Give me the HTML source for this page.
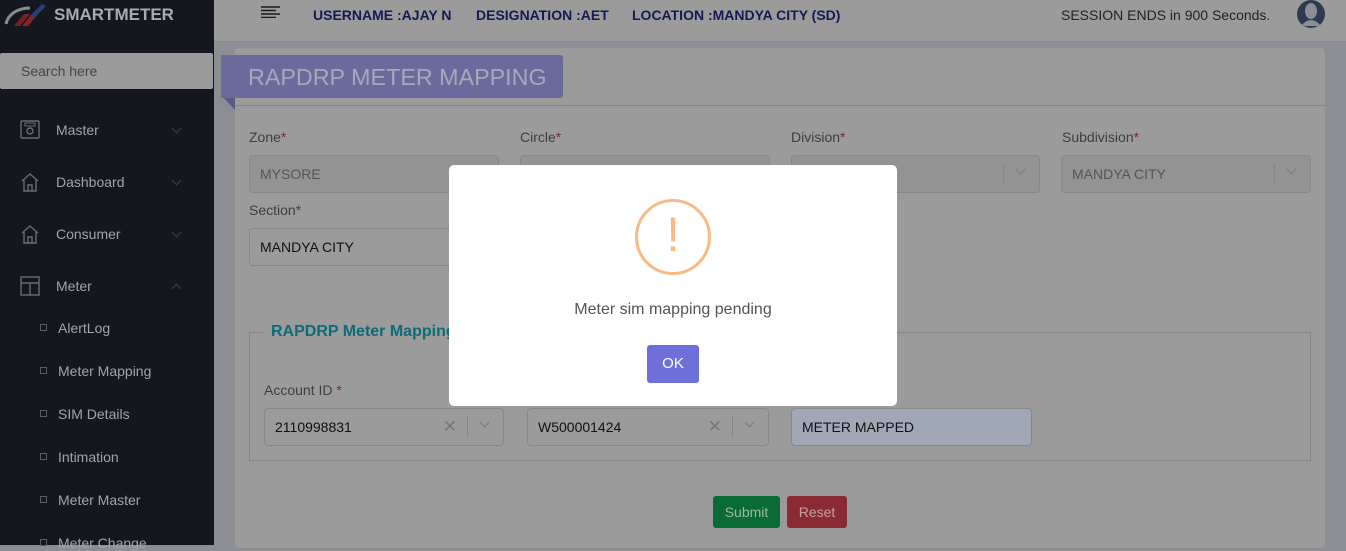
<!DOCTYPE html>
<html><head><meta charset="utf-8"><style>
*{box-sizing:border-box;margin:0;padding:0}
body{width:1346px;height:545px;overflow:hidden;position:relative;font-family:"Liberation Sans",sans-serif;background:#8d8e94}
.a{position:absolute}
.sb{left:0;top:0;width:214px;height:545px;background:#15171e}
.mi{color:#a2a4aa;font-size:14px}
.sub{color:#a2a4aa;font-size:14px}
.sq{width:7px;height:7px;border:1px solid #5a5c62}
.chev{width:7px;height:7px;border-right:1px solid #3c3f47;border-bottom:1px solid #3c3f47;transform:rotate(45deg)}
.lbl{font-size:14px;color:#3e3e3e}
.lbl b{color:#7a2a2a;font-weight:normal}
.inp{height:38px;border:1px solid #888;border-radius:4px;background:#939393;font-size:14px;color:#555;padding:10px 10px}
.inp2{background:#9b9b9b;color:#111}
.dd{position:absolute;right:0;top:8px;width:36px;height:20px;border-left:1px solid #858585}
.dd:after{content:"";position:absolute;left:13px;top:2px;width:6px;height:6px;border-right:1.5px solid #7a7a7a;border-bottom:1.5px solid #7a7a7a;transform:rotate(45deg)}
.x{position:absolute;right:46px;top:8px;color:#777;font-size:17px}
.hd{color:#141a55;font-weight:bold;font-size:14px;top:7px}
</style></head><body>
<div class="a sb"></div>
<svg class="a" style="left:4px;top:2px" width="46" height="28" viewBox="0 0 46 28">
<path d="M2 22 C4 12 14 6 26 6" stroke="#8a8c94" stroke-width="3" fill="none"/>
<path d="M10 24 L20 12 L26 12 L16 24Z" fill="#7a2024"/>
<path d="M18 24 L28 12 L34 12 L24 24Z" fill="#8a2226"/>
<path d="M26 14 L38 2 L42 4 L30 16Z" fill="#2a3f7a"/>
</svg>
<div class="a" style="left:54px;top:5px;color:#a9abb0;font-weight:bold;font-size:17px">SMARTMETER</div>
<div class="a" style="left:0;top:53px;width:213px;height:36px;background:#9b9b9b;border-radius:2px;padding:10px 21px;font-size:14px;color:#454545">Search here</div>
<svg class="a" style="left:20px;top:120px" width="20" height="20"><rect x="1" y="1" width="18" height="17" rx="1" fill="none" stroke="#6a6c72" stroke-width="1.4"/><rect x="5" y="3" width="10" height="3" fill="none" stroke="#6a6c72"/><circle cx="10" cy="11" r="3" fill="none" stroke="#6a6c72" stroke-width="1.4"/></svg>
<svg class="a" style="left:20px;top:172px" width="20" height="20"><path d="M2 9 L10 2 L18 9 M4 8 V19 H16 V8 M8 19 V13 H12 V19" fill="none" stroke="#6a6c72" stroke-width="1.4"/></svg>
<svg class="a" style="left:20px;top:224px" width="20" height="20"><path d="M2 9 L10 2 L18 9 M4 8 V19 H16 V8 M8 19 V13 H12 V19" fill="none" stroke="#6a6c72" stroke-width="1.4"/></svg>
<svg class="a" style="left:20px;top:276px" width="20" height="20"><rect x="1" y="1" width="18" height="18" fill="none" stroke="#6a6c72" stroke-width="1.4"/><path d="M1 7 H19 M10 7 V19" stroke="#6a6c72" stroke-width="1.4"/></svg>
<div class="a mi" style="left:56px;top:122px">Master</div>
<div class="a mi" style="left:56px;top:174px">Dashboard</div>
<div class="a mi" style="left:56px;top:226px">Consumer</div>
<div class="a mi" style="left:56px;top:278px">Meter</div>
<div class="a chev" style="left:173px;top:125px"></div>
<div class="a chev" style="left:173px;top:177px"></div>
<div class="a chev" style="left:173px;top:229px"></div>
<div class="a chev" style="left:173px;top:285px;transform:rotate(225deg)"></div>
<div class="a sq" style="left:40px;top:324px"></div><div class="a sub" style="left:58px;top:320px">AlertLog</div>
<div class="a sq" style="left:40px;top:367px"></div><div class="a sub" style="left:58px;top:363px">Meter Mapping</div>
<div class="a sq" style="left:40px;top:410px"></div><div class="a sub" style="left:58px;top:406px">SIM Details</div>
<div class="a sq" style="left:40px;top:453px"></div><div class="a sub" style="left:58px;top:449px">Intimation</div>
<div class="a sq" style="left:40px;top:496px"></div><div class="a sub" style="left:58px;top:492px">Meter Master</div>
<div class="a sq" style="left:40px;top:539px"></div><div class="a sub" style="left:58px;top:535px">Meter Change</div>
<div class="a" style="left:214px;top:0;width:1132px;height:42px;background:#9b9b9b;border-bottom:1px solid #8a8a8a"></div>
<svg class="a" style="left:261px;top:6px" width="20" height="12"><path d="M0 1H19M0 4.5H15M0 8H19M0 11.5H15" stroke="#1a1a1a" stroke-width="1.5"/></svg>
<div class="a hd" style="left:313px">USERNAME :AJAY N</div>
<div class="a hd" style="left:476px">DESIGNATION :AET</div>
<div class="a hd" style="left:632px">LOCATION :MANDYA CITY (SD)</div>
<div class="a" style="left:1061px;top:7px;font-size:14px;color:#222">SESSION ENDS in 900 Seconds.</div>
<svg class="a" style="left:1297px;top:0" width="28" height="28"><circle cx="14" cy="14" r="14" fill="#2e3a55"/><ellipse cx="14" cy="11" rx="6" ry="8" fill="#8a8e96"/><path d="M4 26 Q14 14 24 26Z" fill="#8a8e96"/></svg>
<div class="a" style="left:235px;top:48px;width:1090px;height:500px;background:#9b9b9b;border-radius:4px"></div>
<div class="a" style="left:235px;top:105px;width:1090px;height:1px;background:#858585"></div>
<svg class="a" style="left:221px;top:95px" width="16" height="16"><path d="M0 0H14V15Z" fill="#5a5a84"/></svg>
<div class="a" style="left:221px;top:55px;width:342px;height:43px;background:#6a6a9c;border-radius:0 3px 3px 0;color:#a8a8ba;font-size:23.3px;padding:9px 0 0 27px;white-space:nowrap">RAPDRP METER MAPPING</div>
<div class="a lbl" style="left:249px;top:129px">Zone<b>*</b></div>
<div class="a lbl" style="left:520px;top:129px">Circle<b>*</b></div>
<div class="a lbl" style="left:791px;top:129px">Division<b>*</b></div>
<div class="a lbl" style="left:1062px;top:129px">Subdivision<b>*</b></div>
<div class="a inp" style="left:249px;top:155px;width:250px">MYSORE</div>
<div class="a inp" style="left:520px;top:155px;width:250px"></div>
<div class="a inp" style="left:791px;top:155px;width:249px"><span class="dd"></span></div>
<div class="a inp" style="left:1061px;top:155px;width:250px">MANDYA CITY<span class="dd"></span></div>
<div class="a lbl" style="left:249px;top:202px">Section<b>*</b></div>
<div class="a inp inp2" style="left:249px;top:228px;width:250px">MANDYA CITY</div>
<div class="a" style="left:249px;top:332px;width:1062px;height:129px;border:1px solid #858585"></div>
<div class="a" style="left:264px;top:323px;background:#9b9b9b;padding:0 7px;color:#0d6c7a;font-weight:bold;font-size:16px">RAPDRP Meter Mapping</div>
<div class="a lbl" style="left:264px;top:382px">Account ID <b>*</b></div>
<div class="a inp inp2" style="left:264px;top:408px;width:240px">2110998831<span class="x">✕</span><span class="dd"></span></div>
<div class="a inp inp2" style="left:527px;top:408px;width:242px">W500001424<span class="x">✕</span><span class="dd"></span></div>
<div class="a inp" style="left:791px;top:408px;width:241px;background:#a0a8b6;color:#111">METER MAPPED</div>
<div class="a" style="left:713px;top:496px;width:67px;height:32px;background:#0a6b34;border-radius:3px;color:#9bb8a4;font-size:14px;text-align:center;line-height:32px">Submit</div>
<div class="a" style="left:787px;top:496px;width:60px;height:32px;background:#8a2b33;border-radius:3px;color:#c4a0a4;font-size:14px;text-align:center;line-height:32px">Reset</div>
<div class="a" style="left:449px;top:165px;width:448px;height:241px;background:#fff;border-radius:5px"></div>
<div class="a" style="left:635px;top:199px;width:76px;height:76px;border:3px solid #f8bb86;border-radius:50%;color:#f8bb86;font-size:48px;text-align:center;line-height:68px">!</div>
<div class="a" style="left:449px;top:301px;width:448px;text-align:center;font-size:16px;color:#545454">Meter sim mapping pending</div>
<div class="a" style="left:647px;top:345px;width:52px;height:38px;background:#6e6fd9;border-radius:3px;color:#fff;font-size:15px;text-align:center;line-height:38px">OK</div>
</body></html>
